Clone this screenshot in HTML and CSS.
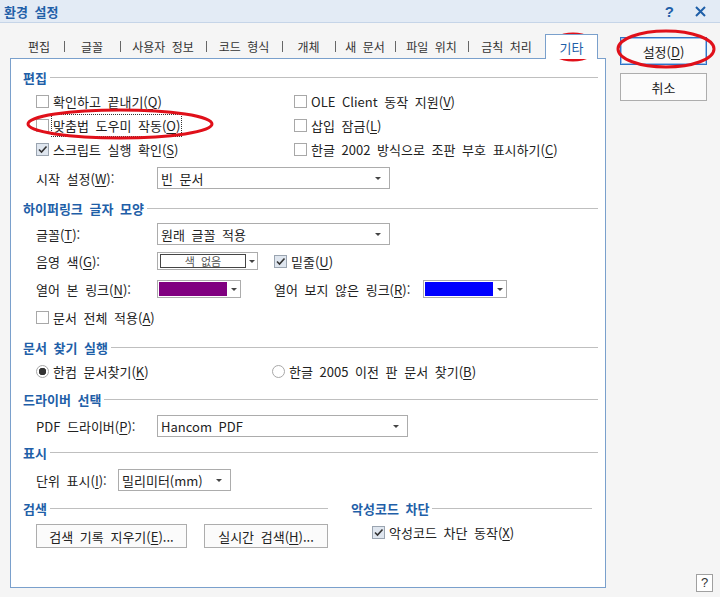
FILE: index.html
```html
<!DOCTYPE html>
<html lang="ko">

<head>
    <meta charset="UTF-8">
    <title>환경 설정</title>
    <link rel="stylesheet" href="styles.css">
</head>

<body>

    <div class="window">
        <div class="titlebar">
            <span class="title">환경 설정</span>
            <div class="title-icons">
                <span class="title-help">?</span>
                <svg width="11" height="11" viewBox="0 0 11 11"><path d="M1 1L10 10M10 1L1 10" stroke="#1f5fa8" stroke-width="2" fill="none"/></svg>
            </div>
        </div>

        <div class="main">
            <div class="left">
                <div class="tabs">
                    <span class="tab">편집</span>
                    <span class="tab sep">글꼴</span>
                    <span class="tab sep">사용자 정보</span>
                    <span class="tab sep">코드 형식</span>
                    <span class="tab sep">개체</span>
                    <span class="tab sep">새 문서</span>
                    <span class="tab sep">파일 위치</span>
                    <span class="tab sep">금칙 처리</span>
                    <span class="tab active">기타</span>
                </div>

                <div class="panel">
                    <div class="sec-head">편집</div>
                    <div class="check-grid">
                        <label class="check"><span class="box"></span><span>확인하고 끝내기(<u>Q</u>)</span></label>
                        <label class="check"><span class="box"></span><span>OLE Client 동작 지원(<u>V</u>)</span></label>
                        <label class="check"><span class="box"></span><span class="focus">맞춤법 도우미 작동(<u>O</u>)</span></label>
                        <label class="check"><span class="box"></span><span>삽입 잠금(<u>L</u>)</span></label>
                        <label class="check"><span class="box checked"><svg width="11" height="11" viewBox="0 0 11 11"><path d="M2 5.5L4.5 8L9.5 2.5" stroke="#333" stroke-width="1.6" fill="none"/></svg></span><span>스크립트 실행 확인(<u>S</u>)</span></label>
                        <label class="check"><span class="box"></span><span>한글 2002 방식으로 조판 부호 표시하기(<u>C</u>)</span></label>
                    </div>
                    <div class="row mt5">
                        <span class="label">시작 설정(<u>W</u>):</span>
                        <div class="select w-start"><span>빈 문서</span></div>
                    </div>

                    <div class="sec-head mt6">하이퍼링크 글자 모양</div>
                    <div class="row mt2">
                        <span class="label">글꼴(<u>T</u>):</span>
                        <div class="select w-start"><span>원래 글꼴 적용</span></div>
                    </div>
                    <div class="row mt3">
                        <span class="label">음영 색(<u>G</u>):</span>
                        <div class="color-pick">
                            <span class="swatch none">색 없음</span>
                            <span class="drop"></span>
                        </div>
                        <label class="check under"><span class="box checked"><svg width="11" height="11" viewBox="0 0 11 11"><path d="M2 5.5L4.5 8L9.5 2.5" stroke="#333" stroke-width="1.6" fill="none"/></svg></span><span>밑줄(<u>U</u>)</span></label>
                    </div>
                    <div class="row mt4">
                        <span class="label">열어 본 링크(<u>N</u>):</span>
                        <div class="color-pick small">
                            <span class="swatch visited"></span>
                            <span class="drop"></span>
                        </div>
                        <span class="label2">열어 보지 않은 링크(<u>R</u>):</span>
                        <div class="color-pick small">
                            <span class="swatch unvisited"></span>
                            <span class="drop"></span>
                        </div>
                    </div>
                    <div class="row mt4">
                        <label class="check"><span class="box"></span><span>문서 전체 적용(<u>A</u>)</span></label>
                    </div>

                    <div class="sec-head mt6">문서 찾기 실행</div>
                    <div class="row radio-row">
                        <label class="radio"><span class="dot on"></span><span>한컴 문서찾기(<u>K</u>)</span></label>
                        <label class="radio"><span class="dot"></span><span>한글 2005 이전 판 문서 찾기(<u>B</u>)</span></label>
                    </div>

                    <div class="sec-head mt4">드라이버 선택</div>
                    <div class="row mt3">
                        <span class="label">PDF 드라이버(<u>P</u>):</span>
                        <div class="select w-pdf"><span>Hancom PDF</span></div>
                    </div>

                    <div class="sec-head mt2">표시</div>
                    <div class="row mt4">
                        <span class="label short">단위 표시(<u>I</u>):</span>
                        <div class="select w-unit"><span>밀리미터(mm)</span></div>
                    </div>

                    <div class="bottom mt4">
                        <div class="col-search">
                            <div class="sec-head">검색</div>
                            <div class="btn-row">
                                <span class="btn wide"><span>검색 기록 지우기(<u>E</u>)...</span></span>
                                <span class="btn mid"><span>실시간 검색(<u>H</u>)...</span></span>
                            </div>
                        </div>
                        <div class="col-guard">
                            <div class="sec-head">악성코드 차단</div>
                            <div class="row guard-row">
                                <label class="check"><span class="box checked"><svg width="11" height="11" viewBox="0 0 11 11"><path d="M2 5.5L4.5 8L9.5 2.5" stroke="#333" stroke-width="1.6" fill="none"/></svg></span><span>악성코드 차단 동작(<u>X</u>)</span></label>
                            </div>
                        </div>
                    </div>
                </div>
            </div>

            <div class="side">
                <span class="btn side-btn primary"><span>설정(<u>D</u>)</span></span>
                <span class="btn side-btn">취소</span>
                <span class="help">?</span>
            </div>
        </div>

        <!-- red marks drawn over the dialog -->
        <svg class="marks" width="720" height="597" viewBox="0 0 720 597">
            <ellipse cx="573" cy="47" rx="23" ry="13" />
            <ellipse cx="666" cy="49" rx="48" ry="18" />
            <ellipse cx="120" cy="124" rx="92" ry="14" />
        </svg>
    </div>

</body>

</html>
```

FILE: styles.css
```css
body {
    margin: 0;
    font-family: 'Noto Sans CJK KR', 'Noto Sans', sans-serif;
    font-size: 13px;
    color: #222;
    background: #f5f5f5;
}

u {
    text-decoration-thickness: 1px;
    text-underline-offset: 2px;
}

.window {
    position: relative;
    width: 720px;
    height: 597px;
    overflow: hidden;
    word-spacing: 3px;
}

.titlebar {
    height: 22px;
    display: flex;
    align-items: center;
    justify-content: space-between;
    padding: 0 14px 0 4px;
    background: #e3ebf5;
    border-bottom: 1px solid #c6d5e8;
}

.title {
    font-weight: bold;
    color: #1f5fa8;
}

.title-icons {
    display: flex;
    align-items: center;
    gap: 21px;
}

.title-help {
    font-weight: bold;
    font-size: 15px;
    color: #1f5fa8;
    font-family: 'Liberation Sans', sans-serif;
}

.main {
    display: flex;
    height: 574px;
    padding-left: 10px;
}

.left {
    width: 596px;
}

/* tab strip */
.tabs {
    height: 35px;
    display: flex;
    align-items: flex-end;
    padding-left: 4px;
}

.tab {
    height: 25px;
    line-height: 25px;
    flex: none;
    margin-bottom: -1px;
    text-align: center;
    font-size: 12px;
    color: #333;
    white-space: nowrap;
}

.tab:nth-child(1) { width: 50px; }
.tab:nth-child(2) { width: 56px; }
.tab:nth-child(3) { width: 86px; }
.tab:nth-child(4) { width: 76px; }
.tab:nth-child(5) { width: 53px; }
.tab:nth-child(6) { width: 60px; }
.tab:nth-child(7) { width: 73px; }
.tab:nth-child(8) { width: 77px; }

.tab.sep {
    background: linear-gradient(#666, #666) no-repeat left 7px / 1px 11px;
}

.tab.active {
    position: relative;
    z-index: 1;
    width: 53px;
    box-sizing: border-box;
    background: #fff;
    border: 1px solid #7aa0cc;
    border-bottom: none;
    color: #1f5fa8;
    font-size: 13px;
}

.panel {
    height: 530px;
    box-sizing: border-box;
    background: #fff;
    border: 1px solid #7aa0cc;
    padding: 6px 7px 0 12px;
}

.sec-head {
    height: 24px;
    display: flex;
    align-items: center;
    gap: 3px;
    font-weight: bold;
    color: #1f5fa8;
    white-space: nowrap;
}

.sec-head::after {
    content: "";
    flex: 1;
    border-top: 1px solid #bfbfbf;
    margin-top: 1px;
}

.mt2 { margin-top: 2px; }
.mt3 { margin-top: 3px; }
.mt4 { margin-top: 4px; }
.mt5 { margin-top: 5px; }
.mt6 { margin-top: 6px; }

.row {
    height: 24px;
    display: flex;
    align-items: center;
    padding-left: 13px;
    white-space: nowrap;
}

.check-grid {
    display: grid;
    grid-template-columns: 258px 1fr;
    grid-auto-rows: 24px;
    padding-left: 13px;
}

.check,
.radio {
    display: flex;
    align-items: center;
    gap: 4px;
    white-space: nowrap;
}

.box {
    width: 13px;
    height: 13px;
    box-sizing: border-box;
    border: 1px solid #a8a8a8;
    background: #fff;
    display: flex;
    align-items: center;
    justify-content: center;
    flex: none;
}

.box.checked {
    background: #dfe6ef;
    border-color: #9aa4b0;
}

.focus {
    outline: 1px dotted #333;
    outline-offset: 1px;
}

.label {
    width: 121px;
    flex: none;
}

.label.short {
    width: 82px;
}

.select {
    height: 22px;
    box-sizing: border-box;
    border: 1px solid #acacac;
    background: #fff;
    display: flex;
    align-items: center;
    justify-content: space-between;
    padding: 0 8px 0 3px;
}

.select::after,
.drop::after {
    content: "";
    border-left: 3px solid transparent;
    border-right: 3px solid transparent;
    border-top: 3px solid #444;
}

.w-start { width: 233px; }
.w-pdf { width: 251px; }
.w-unit { width: 113px; }

.color-pick {
    height: 18px;
    width: 101px;
    box-sizing: border-box;
    border: 1px solid #acacac;
    background: #fff;
    display: flex;
    align-items: center;
    padding-left: 2px;
}

.color-pick.small {
    width: 84px;
    padding-left: 1px;
}

.swatch {
    height: 14px;
    box-sizing: border-box;
}

.swatch.none {
    width: 86px;
    border: 1px solid #444;
    font-size: 11px;
    line-height: 12px;
    text-align: center;
    color: #555;
}

.swatch.visited {
    width: 68px;
    background: #800080;
}

.swatch.unvisited {
    width: 68px;
    background: #0000ff;
}

.drop {
    flex: 1;
    height: 14px;
    display: flex;
    align-items: center;
    justify-content: center;
}

.check.under {
    margin-left: 16px;
}

.label2 {
    width: 149px;
    margin-left: 33px;
    flex: none;
}

.radio-row .radio:first-child {
    width: 236px;
}

.dot {
    width: 13px;
    height: 13px;
    box-sizing: border-box;
    border: 1px solid #a8a8a8;
    border-radius: 50%;
    background: #fff;
    flex: none;
}

.dot.on {
    background: radial-gradient(circle, #333 0 3.5px, #fff 4px);
}

.bottom {
    display: flex;
}

.col-search {
    width: 305px;
}

.col-guard {
    width: 241px;
    margin-left: 23px;
}

.btn-row {
    display: flex;
    gap: 17px;
    padding-left: 13px;
    margin-top: 4px;
}

.btn {
    height: 24px;
    box-sizing: border-box;
    border: 1px solid #adadad;
    background: #fbfbfb;
    display: flex;
    align-items: center;
    justify-content: center;
    white-space: nowrap;
}

.btn.wide { width: 151px; }
.btn.mid { width: 124px; }

.guard-row {
    padding-left: 21px;
}

.side {
    width: 93px;
    margin-left: 14px;
    padding-top: 14px;
    display: flex;
    flex-direction: column;
    gap: 8px;
}

.side-btn {
    width: 87px;
    height: 28px;
}

.side-btn.primary {
    border-color: #2f73c6;
    box-shadow: inset 0 0 0 1px #9cc0ea;
}

.help {
    margin-top: auto;
    margin-bottom: 5px;
    align-self: flex-end;
    width: 17px;
    height: 18px;
    box-sizing: border-box;
    border: 1px solid #a0a0a0;
    background: #fff;
    font-family: 'Liberation Sans', sans-serif;
    font-size: 13px;
    line-height: 16px;
    text-align: center;
    color: #333;
}

.marks {
    position: absolute;
    top: 0;
    left: 0;
    pointer-events: none;
}

.marks ellipse {
    fill: none;
    stroke: #e0101a;
    stroke-width: 3;
}
```
